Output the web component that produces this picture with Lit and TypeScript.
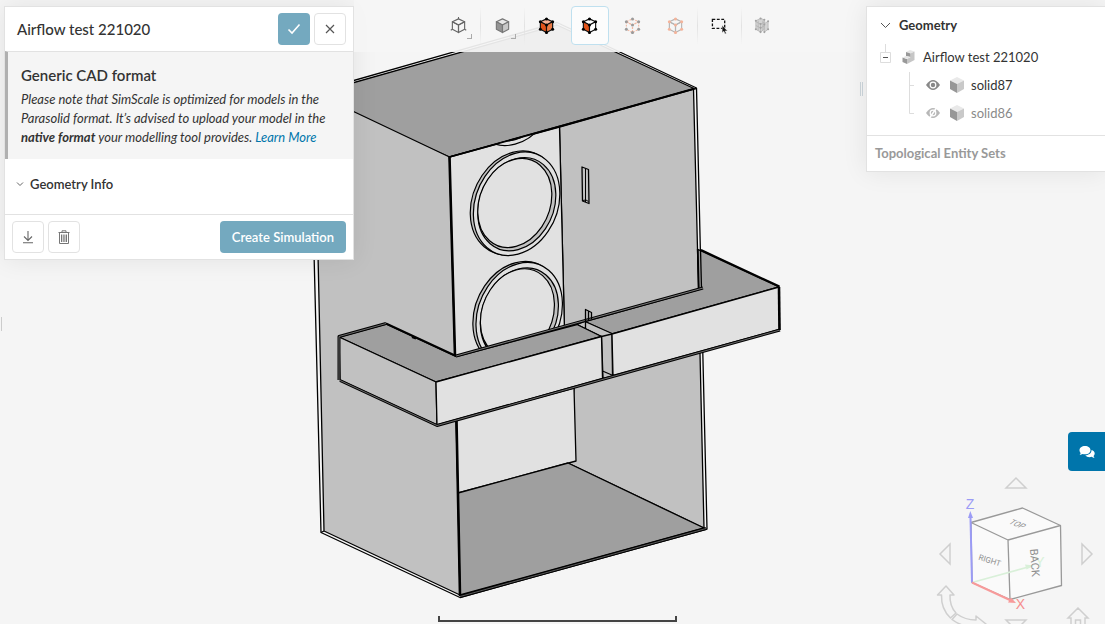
import { LitElement, html, svg, css } from "lit";
import { customElement, state } from "lit/decorators.js";
import { classMap } from "lit/directives/class-map.js";

type CubeLook = {
  top: string;
  left: string;
  right: string;
  line: string;
  dot?: string;
  dash?: boolean;
};

const HEX = [
  [9, 2],
  [15.5, 5],
  [15.5, 13],
  [9, 16.5],
  [2.5, 13],
  [2.5, 5],
  [9, 8.5],
];

const cube = (c: CubeLook) => svg`
  <g stroke=${c.line} stroke-width="1.2" stroke-linejoin="round" stroke-dasharray=${c.dash ? "2 1.2" : "none"}>
    <path d="M9 2 15.5 5 9 8.5 2.5 5Z" fill=${c.top} />
    <path d="M2.5 5 9 8.5V16.5L2.5 13Z" fill=${c.left} />
    <path d="M15.5 5 9 8.5V16.5L15.5 13Z" fill=${c.right} />
  </g>
  ${c.dot ? HEX.map(([x, y]) => svg`<circle cx=${x} cy=${y} r="1.6" fill=${c.dot} />`) : null}
`;

const TOOLS = [
  {
    id: "wire",
    label: "Render mode",
    menu: true,
    gap: true,
    icon: svg`${cube({ top: "none", left: "none", right: "none", line: "#666" })}
      <path d="M9 0V2M.8 14 2.5 13M17.2 14 15.5 13" stroke="#666" stroke-width="1.1" />`,
  },
  {
    id: "view",
    label: "View",
    menu: true,
    gap: true,
    icon: cube({ top: "#e8e8e8", left: "#949494", right: "#c8c8c8", line: "#777" }),
  },
  {
    id: "volume",
    label: "Pick volumes",
    icon: cube({ top: "#f6b095", left: "#e0531a", right: "#e97a45", line: "#111", dot: "#000" }),
  },
  {
    id: "face",
    label: "Pick faces",
    icon: cube({ top: "#fff", left: "#e0531a", right: "#fff", line: "#111", dot: "#000" }),
  },
  {
    id: "edge",
    label: "Pick edges",
    icon: cube({ top: "none", left: "none", right: "none", line: "#f4b9a2", dot: "#9b9b9b", dash: true }),
  },
  {
    id: "node",
    label: "Pick nodes",
    gap: true,
    icon: cube({ top: "none", left: "none", right: "none", line: "#b4b4b4", dot: "#f4b49b" }),
  },
  {
    id: "box",
    label: "Box selection",
    gap: true,
    icon: svg`<path d="M1.5 2.5H14.5V12H1.5Z" fill="none" stroke="#111" stroke-width="1.4" stroke-dasharray="3 1.7" />
      <path d="M11.8 8.7V16.7L13.6 15.1 14.9 17.9 16.2 17.3 14.9 14.7H17.4Z" fill="#111" stroke="#f5f5f5" stroke-width=".5" />`,
  },
  {
    id: "mesh",
    label: "Mesh clip",
    narrow: true,
    icon: svg`<g fill="#d4d4d4" stroke="#b2b2b2" stroke-width=".8">
        <path d="M3 4 8 1.5 12 3V13L8 16 3 13Z" /><path d="M3 5 8 7.5 13 5M8 7.5V16M3 9 8 11.5 13 9M5.5 3.8V14.5M10.5 3.8V14.5" fill="none" />
        <path d="M12 7 16 4.5V13L12 16Z" /></g>
      ${[[3, 4], [8, 1.5], [12, 3], [3, 13], [8, 16], [16, 4.5], [16, 13], [12, 16], [8, 7.5], [12, 8], [8, 11.5]].map(
        ([x, y]) => svg`<circle cx=${x} cy=${y} r="1.1" fill="#a2a2a2" />`,
      )}`,
  },
];

const solid = svg`
  <path d="M8 0 15 3.5 8 7 1 3.5Z" fill="#e9e9e9" />
  <path d="M1 3.5 8 7V16L1 12Z" fill="#979797" />
  <path d="M15 3.5 8 7V16L15 12Z" fill="#c9c9c9" />`;

const bore = (dx: number, dy: number) => {
  const ring = (cx: number, cy: number, a: number, b: number, fill: string) =>
    svg`<circle r="1" fill=${fill} vector-effect="non-scaling-stroke"
      transform="matrix(${a} ${-0.27 * a} ${0.03 * b} ${b} ${cx} ${cy})" />`;
  return svg`<g transform="translate(${dx} ${dy})" stroke-width="1.2">
    ${ring(514, 202.8, 43.7, 50.4, "#c1c1c1")}
    ${ring(516.6, 203.8, 43.2, 50.4, "#e1e1e1")}
    ${ring(516.8, 204.2, 39, 45.4, "#c1c1c1")}
    ${ring(514.8, 203, 37, 43.4, "#e1e1e1")}
  </g>`;
};

const rim = (d: string, gap: string) => svg`
  <path d=${d} stroke-width="3" />
  <path d=${d} stroke=${gap} stroke-width="0.9" />`;

@customElement("cad-model")
class CadModel extends LitElement {
  static styles = css`
    :host {
      display: block;
      min-width: 0;
      min-height: 0;
      overflow: hidden;
    }
    .model {
      display: block;
      width: 100%;
      height: 100%;
    }
  `;

  render() {
    return html`<svg class="model" viewBox="0 0 1105 624" preserveAspectRatio="xMidYMid slice" role="img" aria-label="Model">
      <defs>
        <clipPath id="front"><path d="M450 157 559.5 127 564.5 330 455 358Z" /></clipPath>
      </defs>
      <g stroke="#000" stroke-width="1.3" stroke-linejoin="round" fill="none">
        <path d="M310 93 557 22.5 696.5 88 707 529 460 597.5 321 532.5Z" fill="#f5f5f5" />
        <path d="M310 95 557 25 694 88.5 449.5 157Z" fill="#9f9f9f" />
        <path d="M314.5 93 449.5 157 455 356 460 595 324 531Z" fill="#c1c1c1" />
        <path d="M559.5 127 693.5 89 698.5 288 704 528 568 463 574 388 564.5 330Z" fill="#c1c1c1" />
        <path d="M449.5 157 559.5 127 564.5 330 455 358Z" fill="#e1e1e1" />
        <g clip-path="url(#front)">${bore(-3, -110)}${bore(0, 0)}${bore(2.6, 110.4)}</g>
        <path d="M456 420 574 388 576 461 458 493Z" fill="#e1e1e1" />
        <path d="M458 493 568 463 704 528 460 595Z" fill="#9f9f9f" />
        <path d="M449.5 157 455 356M456.5 420 460 596" stroke-width="2.6" />
        <path d="M449.5 157 696 88.5" stroke-width="1.8" />
        ${rim("M460 596.5 706 528.5", "#666")}
        <path d="M321 532.5 324 531" />
        <path d="M582 167 588.5 169.5 589 203.5 582.5 201Z" />
        <path d="M585.5 168.5V202M582.5 200.5 586 200 588.5 201.5" stroke-width="1" />

        <path d="M698 249.5 779 287 612 334 585 321.5 699 289.5Z" fill="#9f9f9f" />
        <path d="M697.5 249 698.5 288M700.5 249 701.5 288" />
        <path d="M577 324.5 585 321.5 612 333.5 612.5 376 603 378.5 601.5 336.5Z" fill="#c1c1c1" />
        <path d="M601.5 336.5 612 334M602.5 371 613 375.5" />
        <path d="M612 334 779 287 779.5 329.5 613 375.5Z" fill="#e1e1e1" />
        <path d="M339 337 386 324 456 356.5 577 324.5 601.5 336.5 436 382Z" fill="#9f9f9f" />
        <path d="M339 337 436 382 437 425 340 380Z" fill="#c1c1c1" />
        <path d="M436 382 601.5 336.5 602.5 378.5 437 425Z" fill="#e1e1e1" />
        ${rim("M340 380.5 437 425.5 780 330", "#777")}
        ${rim("M456 356 703 288", "#888")}
        ${rim("M386 323.5 339 336.5V380", "#777")}
        <path d="M386 323.5 456 356M701 250 779.5 286.5" stroke-width="2" />
        <path d="M779 287 779.5 330" stroke-width="2.6" />
        <path d="M585.5 328V309.5L591.5 312.5V319M588.5 311V320" />
        <path d="M412 337 416 338.5" stroke-width="2.2" />
      </g>
      <path d="M439 616V621H676V616" fill="none" stroke="#444" stroke-width="2" />
    </svg>`;
  }
}

@customElement("view-cube")
class ViewCube extends LitElement {
  static styles = css`
    :host {
      display: grid;
      grid-template: 20px 122px 20px / 20px 122px 20px;
      place-items: center;
    }
    button {
      display: flex;
      padding: 0;
      border: 0;
      background: none;
      color: #cfcfcf;
      cursor: pointer;
    }
    svg {
      display: block;
      overflow: visible;
    }
    .up { grid-area: 1 / 2; }
    .left { grid-area: 2 / 1; }
    .box { grid-area: 2 / 2; }
    .right { grid-area: 2 / 3; }
    .down { grid-area: 3 / 2; }
    .roll {
      grid-area: 2 / 1 / 4 / 3;
      place-self: end start;
    }
    .home {
      grid-area: 2 / 2 / 4 / 4;
      place-self: end;
      padding-right: 8px;
    }
    .face {
      font: 11px Roboto, "Liberation Sans", sans-serif;
      fill: #8f8f8f;
      text-anchor: middle;
    }
    .small { font-size: 8px; }
    .axis {
      font: 14px "Liberation Sans", sans-serif;
      text-anchor: middle;
    }
  `;

  private arrow(side: string, label: string, d: string) {
    return html`<button class=${side} aria-label=${label}>
      <svg width="22" height="22" viewBox="-11 -11 22 22" fill="none" stroke="currentColor" stroke-width="1.5"><path d=${d} /></svg>
    </button>`;
  }

  render() {
    return html`
      ${this.arrow("up", "Rotate up", "M-10 5H10L0-5Z")}
      ${this.arrow("left", "Rotate left", "M5-10V10L-5 0Z")}
      <svg class="box" width="122" height="122" viewBox="955 493 122 122" role="img" aria-label="Orientation">
        <g fill="#fafafa" stroke="#999" stroke-width="1.3" stroke-linejoin="round">
          <path d="M971 522.5 1022.5 508 1060.5 525.5 1061.5 585.5 1010 599.5 972 582.5Z" />
          <path d="M971 522.5 1008 540 1060.5 525.5M1008 540 1010 599.5" fill="none" />
        </g>
        <path d="M972 582.5 1032 566" fill="none" stroke="#d9f0d9" stroke-width="1.6" />
        <path d="M1034 565.5 1025 564.5 1026.500 569.5Z" fill="#d9f0d9" />
        <text class="axis" x="1040" y="567" fill="#d9f2d9">Y</text>
        <path d="M972 582.5 970.5 518" stroke="#9b9bf5" stroke-width="2" />
        <path d="M968 518 970.3 511 973 518Z" fill="#9b9bf5" />
        <text class="axis" x="970" y="509" fill="#9b9bf5">Z</text>
        <path d="M972 582.5 1012 601" stroke="#f79a9a" stroke-width="2" />
        <path d="M1016 603 1008 602.5 1011 597.5Z" fill="#f79a9a" />
        <text class="axis" x="1020.5" y="609" fill="#f58e8e">X</text>
        <text class="face small" transform="translate(989 563) rotate(18)">RIGHT</text>
        <text class="face" transform="translate(1031 563) rotate(86)">BACK</text>
        <text class="face small" transform="translate(1015 526) rotate(22) skewX(-30)">TOP</text>
      </svg>
      ${this.arrow("right", "Rotate right", "M-5-10V10L5 0Z")}
      ${this.arrow("down", "Rotate down", "M-10-5H10L0 5Z")}
      <button class="roll" aria-label="Roll">
        <svg width="54" height="50" viewBox="935 585 54 50" fill="none" stroke="currentColor" stroke-width="1.5" stroke-linejoin="round">
          <path d="M946 586 937.5 595H941.5Q941 609 950.5 618L956 613Q949.5 606 950 595H954Z" />
          <path d="M957 614 952 619.5Q962 627 976 627.5V632L986 624 976 616V620Q965 620 957 614Z" />
        </svg>
      </button>
      <button class="home" aria-label="Home view">
        <svg width="22" height="28" viewBox="1067 607 22 28" fill="none" stroke="currentColor" stroke-width="1.5">
          <path d="M1078 608 1068 618H1071V630H1085V618H1088ZM1075.5 630V620H1080.5V630" />
        </svg>
      </button>
    `;
  }
}

@customElement("app-root")
class AppRoot extends LitElement {
  static styles = css`
    :host {
      display: grid;
      grid-template: 100vh / 100%;
      overflow: hidden;
      background: #f5f5f5;
      color: #333;
      font: 13px/20px Lato, sans-serif;
    }
    * { box-sizing: border-box; }
    button {
      display: flex;
      align-items: center;
      justify-content: center;
      padding: 0;
      border: 0;
      background: none;
      color: #666;
      font: inherit;
      cursor: pointer;
    }
    svg { display: block; }
    h1, h2, p { margin: 0; }
    cad-model, .hud { grid-area: 1 / 1; }
    .hud {
      display: flex;
      align-items: flex-start;
      min-width: 0;
      min-height: 0;
    }
    .edge {
      align-self: stretch;
      display: flex;
      align-items: center;
      width: 4px;
      padding-top: 24px;
    }
    .edge span {
      width: 2px;
      height: 14px;
      border-right: 1px solid #ccc;
    }
    .card {
      margin-top: 6px;
      border: 1px solid #e2e2e2;
      background: #fff;
      box-shadow: 0 0 24px rgba(0, 0, 0, 0.08);
    }
    .details { width: 350px; }
    .head, .foot {
      display: flex;
      align-items: center;
      gap: 4px;
      height: 44px;
      padding: 0 7px;
    }
    .head { padding-left: 12px; }
    .foot {
      height: 45px;
      border-top: 1px solid #e2e2e2;
    }
    .title {
      flex: 1;
      font-size: 15px;
      font-weight: 500;
    }
    .square, .primary {
      height: 32px;
      border-radius: 4px;
    }
    .square {
      width: 32px;
      border: 1px solid #e2e2e2;
    }
    .primary {
      background: #74a9bf;
      color: #fff;
      font-weight: 600;
    }
    .ok { width: 32px; }
    .create {
      margin-left: auto;
      padding: 0 12px;
    }
    .notice {
      padding: 12px 13px;
      border-top: 1px solid #e2e2e2;
      border-left: 3px solid #b0b0b0;
      background: #f5f5f5;
    }
    .notice h2 {
      font-size: 15px;
      line-height: 22px;
      font-weight: 600;
    }
    .notice p {
      padding-top: 4px;
      line-height: 19px;
      font-style: italic;
    }
    .notice a {
      color: #0075ab;
      text-decoration: none;
    }
    .info {
      width: 100%;
      height: 55px;
      padding: 0 11px 6px;
      justify-content: flex-start;
      gap: 6px;
      color: #333;
      font-weight: 600;
    }
    .bar {
      flex: 1;
      display: flex;
      justify-content: center;
      align-items: flex-start;
      min-width: 0;
      height: 52px;
      padding: 6px 0 0 4px;
      background: rgba(245, 245, 245, 0.93);
    }
    .group {
      display: flex;
      align-items: center;
    }
    .tool {
      position: relative;
      width: 38px;
      height: 39px;
      margin-right: 5px;
      border: 1px solid transparent;
      border-radius: 4px;
    }
    .narrow {
      width: 34px;
      margin-right: 0;
    }
    .last { margin-right: 2px; }
    .active {
      border-color: #bfe0ef;
      background: #fcfcfc;
    }
    .more::after {
      content: "";
      position: absolute;
      right: 5px;
      bottom: 5px;
      width: 4px;
      height: 4px;
      border: solid #aaa;
      border-width: 0 1px 1px 0;
    }
    .rule {
      width: 1px;
      height: 38px;
      margin-right: 3px;
      background: linear-gradient(transparent, #e2e2e2, transparent);
    }
    .side {
      display: flex;
      flex-direction: column;
      align-items: flex-end;
      height: 100%;
    }
    .dock {
      display: flex;
      align-items: center;
      gap: 3px;
    }
    .grip {
      width: 3px;
      height: 14px;
      margin-top: 6px;
      border: solid #ccd5db;
      border-width: 0 1px;
    }
    .tree {
      width: 239px;
      border-right: 0;
    }
    .tree ul {
      margin: 0;
      padding: 0 0 8px;
      list-style: none;
    }
    .tree ul ul { padding: 0 0 0 42px; }
    .row {
      display: flex;
      align-items: center;
      height: 28px;
    }
    .section {
      width: 100%;
      height: 36px;
      padding-left: 13px;
      justify-content: flex-start;
      gap: 8px;
      color: #333;
      font-weight: 700;
    }
    .root {
      gap: 11px;
      padding-left: 13px;
    }
    .part {
      display: flex;
      align-items: center;
      gap: 8px;
    }
    .branch {
      stroke: #ddd;
      fill: none;
    }
    .eye { margin: 0 9px 0 12px; }
    .solid { margin-right: 6px; }
    .hidden { color: #8a8a8a; }
    .hidden button { opacity: 0.6; }
    .sets {
      height: 36px;
      padding: 0 8px;
      border-top: 1px solid #e2e2e2;
      color: #999;
      line-height: 34px;
      font-weight: 700;
    }
    .chat {
      width: 37px;
      height: 39px;
      margin: auto 0 2px;
      border-radius: 4px 0 0 4px;
      background: #0075ab;
    }
    view-cube {
      flex: none;
      margin: 0 8px -11px 0;
    }
  `;

  @state() private tool = "face";
  @state() private parts = [
    { name: "solid87", shown: true },
    { name: "solid86", shown: false },
  ];

  private toggle(i: number) {
    this.parts = this.parts.map((p, n) => (n === i ? { ...p, shown: !p.shown } : p));
  }

  private renderDetails() {
    return html`<section class="card details">
      <header class="head">
        <h1 class="title">Airflow test 221020</h1>
        <button class="primary ok" aria-label="Apply">
          <svg width="14" height="12" viewBox="0 0 14 12" fill="none" stroke="#fff" stroke-width="1.6"><path d="M1.5 6.5 5 10 12.5 1.5" /></svg>
        </button>
        <button class="square" aria-label="Close">
          <svg width="10" height="10" viewBox="0 0 10 10" stroke="#555" stroke-width="1.2"><path d="M1 1 9 9M9 1 1 9" /></svg>
        </button>
      </header>
      <div class="notice">
        <h2>Generic CAD format</h2>
        <p>
          Please note that SimScale is optimized for models in the Parasolid format. It’s advised to upload your model in the
          <b>native format</b> your modelling tool provides. <a href="#learn">Learn More</a>
        </p>
      </div>
      <button class="info">
        <svg width="8" height="6" viewBox="0 0 8 6" fill="none" stroke="#666"><path d="M1 1.5 4 4.5 7 1.5" /></svg>
        Geometry Info
      </button>
      <footer class="foot">
        <button class="square" aria-label="Download">
          <svg width="12" height="14" viewBox="0 0 12 14" fill="none" stroke="#666" stroke-width="1.1"><path d="M6 1V10.5M2 6.5 6 10.5 10 6.5M1 12.8H11" /></svg>
        </button>
        <button class="square" aria-label="Delete">
          <svg width="12" height="14" viewBox="0 0 12 14" fill="none" stroke="#777">
            <path d="M.5 2.5H11.5M4 2.5V.8H8V2.5M1.5 2.5V13.5H10.5V2.5" /><path d="M3.5 4.5V12M5.2 4.5V12M6.9 4.5V12M8.5 4.5V12" />
          </svg>
        </button>
        <button class="primary create">Create Simulation</button>
      </footer>
    </section>`;
  }

  private renderTools() {
    return html`<nav class="bar" aria-label="Viewer tools">
      ${TOOLS.map(
        (t) => html`<div class="group">
          <button
            class=${classMap({
              tool: true,
              more: !!t.menu,
              narrow: !!t.narrow,
              last: !!t.gap,
              active: t.id === this.tool,
            })}
            aria-label=${t.label}
            @click=${() => (this.tool = t.id)}
          >
            <svg width="17" height="17" viewBox="0 0 18 18">${t.icon}</svg>
          </button>
          ${t.gap ? html`<span class="rule"></span>` : null}
        </div>`,
      )}
    </nav>`;
  }

  private renderTree() {
    return html`<section class="card tree">
      <button class="section">
        <svg width="11" height="7" viewBox="0 0 11 7" fill="none" stroke="#555"><path d="M1 1 5.5 5.5 10 1" /></svg>
        Geometry
      </button>
      <ul>
        <li>
          <div class="row root">
            <button aria-label="Collapse">
              <svg width="11" height="28" viewBox="0 0 11 28" fill="none" stroke="#ddd">
                <path d="M5.5 1V9M.5 9.5H10.5V19.5H.5Z" /><path d="M3 14.5H8" stroke="#555" />
              </svg>
            </button>
            <span class="part">
              <svg width="13" height="16" viewBox="0 0 13 16">
                <path d="M4 3 8 1 12.5 2.5 8.5 4.5Z" fill="#e6e6e6" /><path d="M8.5 4.5 12.5 2.5V11L5 15V10L8.5 8Z" fill="#c6c6c6" />
                <path d="M4 3 8.5 4.5V8L4 7Z" fill="#999" /><path d="M.5 8.5 5 10V15L.5 13Z" fill="#999" /><path d="M.5 8.5 4 7 8.5 8 5 10Z" fill="#e6e6e6" />
              </svg>
              Airflow test 221020
            </span>
          </div>
          <ul>
            ${this.parts.map(
              (p, i) => html`<li class=${classMap({ row: true, hidden: !p.shown })}>
                <svg class="branch" width="5" height="28" viewBox="0 0 5 28">
                  <path d=${i === this.parts.length - 1 ? "M.5 0V14.5H5" : "M.5 1V28M.5 14.5H5"} />
                </svg>
                <button class="eye" aria-label=${`Toggle ${p.name}`} @click=${() => this.toggle(i)}>
                  <svg width="14" height="12" viewBox="0 0 14 12">
                    <path d="M0 6Q7-4 14 6 7 16 0 6Z" fill="#888" /><circle cx="7" cy="6" r="3.4" fill="#fff" /><circle cx="7" cy="6" r="2.2" fill="#888" />
                    ${p.shown ? null : svg`<path d="M3.5 11 10.5 1" stroke="#fff" stroke-width="1.5" />`}
                  </svg>
                </button>
                <svg class="solid" width="16" height="16" viewBox="0 0 16 16">${solid}</svg>
                ${p.name}
              </li>`,
            )}
          </ul>
        </li>
      </ul>
      <div class="sets">Topological Entity Sets</div>
    </section>`;
  }

  render() {
    return html`
      <cad-model></cad-model>
      <div class="hud">
        <div class="edge"><span></span></div>
        ${this.renderDetails()} ${this.renderTools()}
        <aside class="side">
          <div class="dock"><span class="grip"></span>${this.renderTree()}</div>
          <button class="chat" aria-label="Chat">
            <svg width="16" height="14" viewBox="0 0 16 14" fill="#fff">
              <path d="M6 1C2.8 1 .5 2.9.5 5.2.5 6.3 1 7.2 1.7 7.9 1.5 8.7 1 9.3.6 9.8 1.9 9.8 2.9 9.3 3.6 8.9 4.3 9.2 5.1 9.3 6 9.3 9.2 9.3 11.5 7.5 11.5 5.2 11.5 2.9 9.2 1 6 1Z" />
              <path d="M12.5 5C12.7 7.8 10 10.2 6.3 10.3 7.2 11.5 8.8 12.2 10.5 12.2 11.3 12.2 12 12 12.6 11.8 13.3 12.3 14.3 12.8 15.6 12.8 15.2 12.3 14.7 11.7 14.5 10.9 15.2 10.2 15.7 9.4 15.7 8.4 15.7 6.9 14.4 5.6 12.5 5Z" />
            </svg>
          </button>
          <view-cube></view-cube>
        </aside>
      </div>
    `;
  }
}
